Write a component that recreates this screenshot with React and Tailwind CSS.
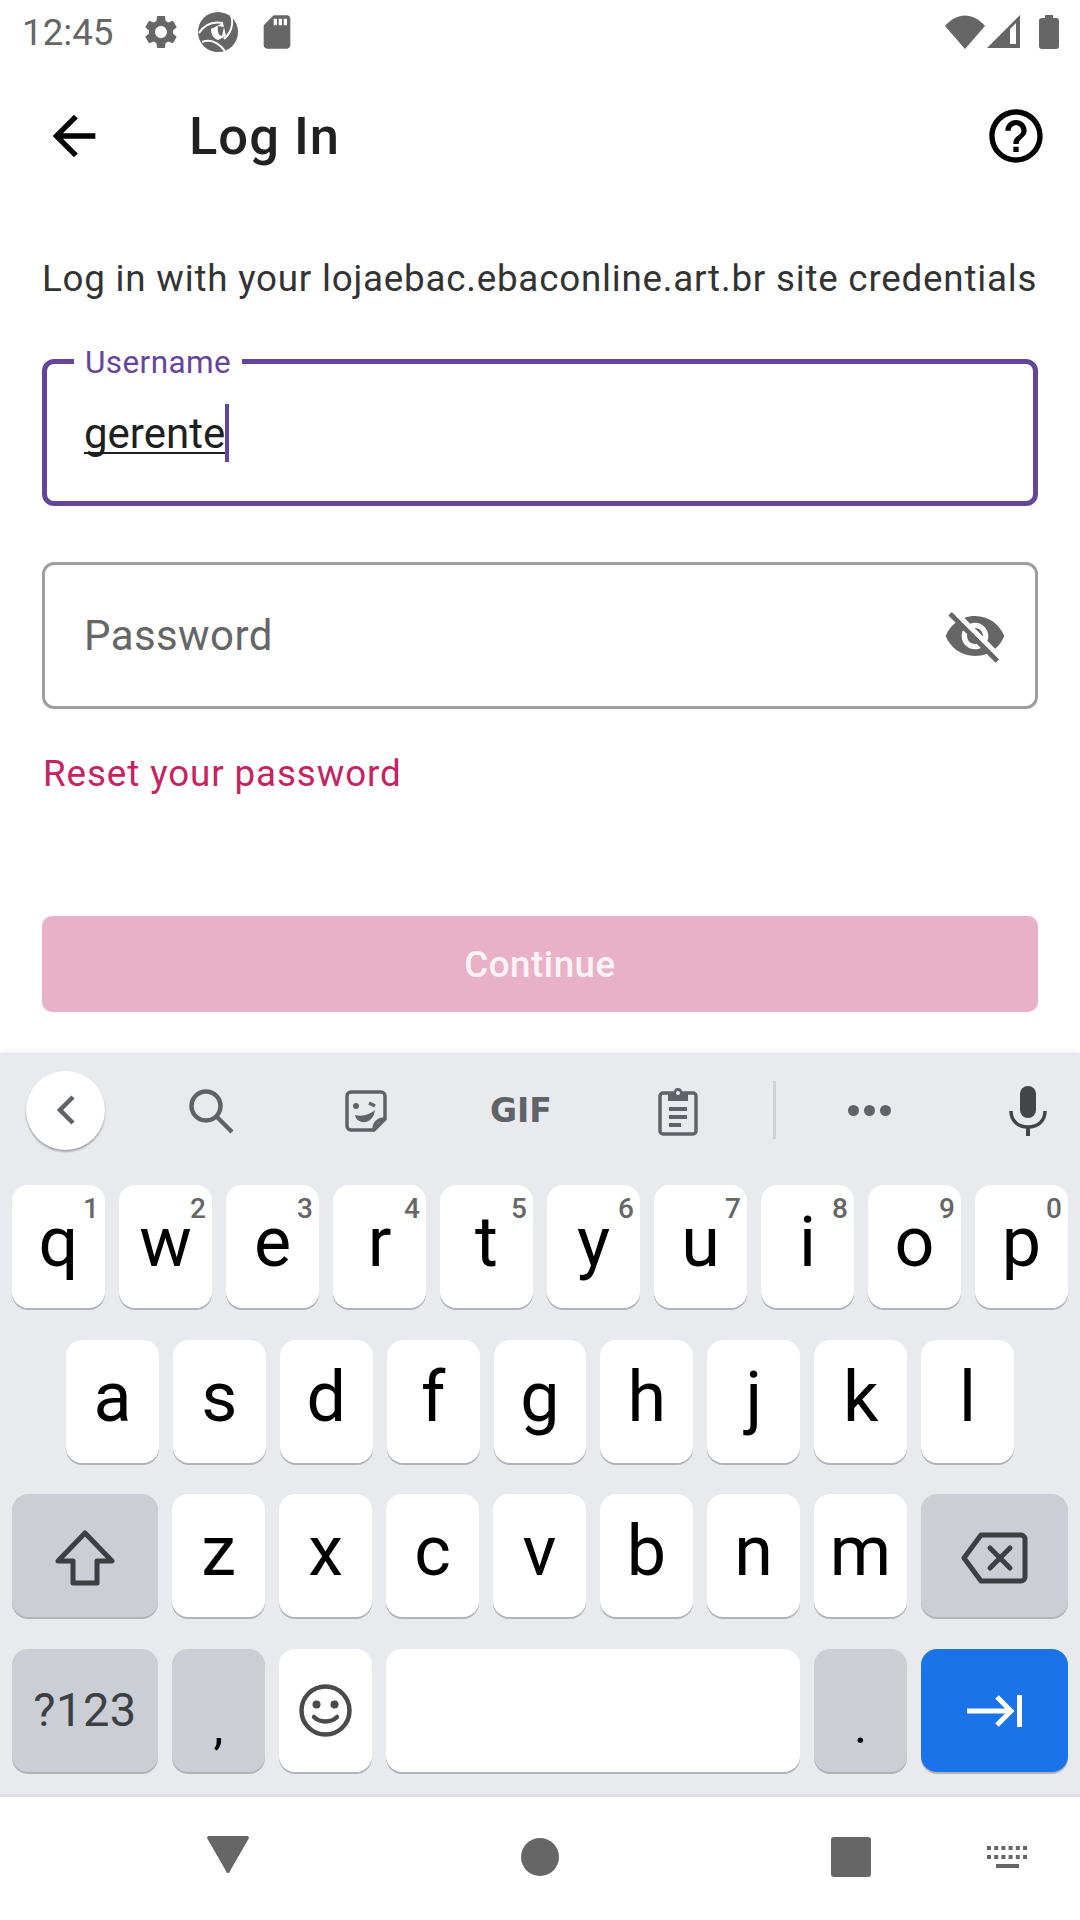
import { MdArrowBack, MdHelpOutline, MdVisibilityOff, MdSettings, MdSdCard } from "react-icons/md";

const Key = ({ label, hint }) => (
  <div className="relative flex-1 h-[123px] bg-white rounded-[16px] shadow-[0_2px_0_#b1b3b7] flex justify-center pt-[22px] text-[70px] leading-[70px] text-black">
    <span className="h-[70px]">{label}</span>
    {hint && <span className="absolute top-[8px] right-[6px] text-[28px] leading-[32px] font-medium text-[#666666]">{hint}</span>}
  </div>
)

const Aperture = () => (
  <svg width="40" height="40" viewBox="0 0 40 40" className="ml-[17px]">
    <circle cx="20" cy="20" r="20" fill="#666666" />
    <path d="M1 21C6 13 14 9 25 11" fill="none" stroke="white" strokeWidth="2" />
    <path d="M33 3C36 12 33 21 26 27" fill="none" stroke="white" strokeWidth="2" />
    <path d="M4 30C12 27 20 30 27 39" fill="none" stroke="white" strokeWidth="2" />
    <path d="M13 17L25 11L28 24L20 28C15 26 13 22 13 17Z" fill="white" />
    <path d="M20 14L26 15L24 24C21 24 19 20 20 14Z" fill="#666666" />
  </svg>
)

const Sticker = () => (
  <svg width="44" height="44" viewBox="0 0 44 44" className="ml-[109px] mt-[2px]" fill="none" stroke="#5f6368">
    <path d="M30 41H7a4 4 0 0 1-4-4V7a4 4 0 0 1 4-4h30a4 4 0 0 1 4 4v23L30 41Z" strokeWidth="3.5" />
    <path d="M30 41c0-7 4-11 11-11" strokeWidth="3.5" />
    <circle cx="12" cy="17" r="3" fill="#5f6368" stroke="none" />
    <path d="M25 14l6 3" strokeWidth="3.5" />
    <path d="M11 26c8 2 15-1 20-5-1 8-6 13-13 12-4-1-6-3-7-7Z" fill="#5f6368" stroke="none" />
  </svg>
)

const Clipboard = () => (
  <svg width="40" height="50" viewBox="0 0 40 50" className="ml-[107px] mt-[2px]" fill="none">
    <rect x="2" y="7" width="36" height="41" rx="3" stroke="#5f6368" strokeWidth="3.5" />
    <path d="M10 6h6a4 4 0 0 1 8 0h6v9H10Z" fill="#5f6368" />
    <circle cx="20" cy="7" r="2" fill="#e8eaed" />
    <rect x="11" y="21" width="18" height="4" fill="#5f6368" />
    <rect x="11" y="29" width="18" height="4" fill="#5f6368" />
    <rect x="11" y="37" width="12" height="4" fill="#5f6368" />
  </svg>
)

const Mic = () => (
  <svg width="38" height="50" viewBox="0 0 38 50" className="ml-[118px] mt-[2px]" fill="none">
    <rect x="11" y="0" width="16" height="32" rx="8" fill="#444548" />
    <path d="M2 25c0 10 7 16 17 16s17-6 17-16" stroke="#444548" strokeWidth="3.5" />
    <rect x="17" y="40" width="4" height="10" fill="#444548" />
  </svg>
)

const KeyboardGlyph = () => (
  <svg width="41" height="22" viewBox="0 0 41 22" fill="#666666" className="ml-[116px]">
    {[0, 7.2, 14.4, 21.6, 28.8, 36].map((x) => (
      <g key={x}>
        <rect x={x} y="0" width="4" height="4" />
        <rect x={x} y="9" width="4" height="4" />
      </g>
    ))}
    <rect x="9" y="18" width="23" height="4" />
  </svg>
)

const App = () => {
  return (
    <div className="w-full h-[1920px] bg-white flex flex-col font-[Roboto,sans-serif] overflow-hidden">
      {/* status bar */}
      <div className="h-[63px] flex items-center pl-[22px] pr-[21px] text-[#666666]">
        <span className="text-[36.75px] leading-[40px] w-[91px] mt-[3px]">12:45</span>
        <MdSettings size={40} className="ml-[28px]" />
        <Aperture />
        <MdSdCard size={40} className="ml-[19px]" />
        <svg width="40" height="34" viewBox="0 0 40 34" className="ml-auto" fill="#666666">
          <path d="M20 34L0 11C12 -3 28 -3 40 11Z" />
        </svg>
        <svg width="33" height="33" viewBox="0 0 33 33" className="ml-[2px]" fill="#666666">
          <path d="M33 0V33H0ZM29 8L23 14V29H29Z" fillRule="evenodd" />
        </svg>
        <svg width="20" height="34" viewBox="0 0 20 34" className="ml-[19px]" fill="#666666">
          <path d="M6 0H14V3H17a3 3 0 0 1 3 3V31a3 3 0 0 1-3 3H3a3 3 0 0 1-3-3V6a3 3 0 0 1 3-3H6Z" />
        </svg>
      </div>

      {/* app bar */}
      <div className="h-[146px] flex items-center pl-[42px] pr-[32px]">
        <MdArrowBack size={64} className="text-black" />
        <div className="ml-[83px] text-[52.5px] leading-[60px] font-medium tracking-[1px] text-[#212121]">Log In</div>
        <MdHelpOutline size={64} className="ml-auto text-black" />
      </div>

      {/* form */}
      <div className="px-[42px] flex flex-col">
        <p className="mt-[42px] text-[36.75px] leading-[56px] tracking-[0.78px] text-[#333333] whitespace-nowrap">
          Log in with your lojaebac.ebaconline.art.br site credentials
        </p>

        <div className="relative mt-[52px] h-[147px] border-[5px] border-[#65459a] rounded-[12px] pl-[37px]">
          <span className="absolute -top-[13px] left-[27px] bg-white px-[11px] text-[31.5px] leading-[24px] text-[#65459a] tracking-[0.4px]">Username</span>
          <div className="flex items-start">
            <span className="mt-[52px] text-[42px] leading-[36px] text-[#1f1f1f] border-b-[2px] border-[#1f1f1f]">gerente</span>
            <span className="mt-[40px] w-[4px] h-[58px] bg-[#65459a]" />
          </div>
        </div>

        <div className="mt-[56px] h-[147px] border-[3px] border-[#9e9e9e] rounded-[12px] pl-[39px] pr-[28px] flex items-center justify-between">
          <span className="text-[42px] leading-[50px] text-[#666666] tracking-[0.4px]">Password</span>
          <MdVisibilityOff size={64} className="text-[#666666]" />
        </div>

        <div className="mt-[43px] text-[36.75px] leading-[44px] text-[#c52362] tracking-[0.9px] pl-[1px]">Reset your password</div>

        <div className="mt-[120px] h-[96px] rounded-[10px] bg-[#e8b1c7] flex items-center justify-center text-[36.75px] font-medium tracking-[0.5px] text-[#fdf3f7]">
          <span className="mt-[2px]">Continue</span>
        </div>
      </div>

      {/* keyboard */}
      <div className="mt-auto bg-[#e8eaed] border-b-[3px] border-[#e0e0e0] shadow-[0_-2px_4px_rgba(0,0,0,0.05)]">
        <div className="h-[132px] flex items-center pl-[26px] pb-[18px]">
          <div className="w-[79px] h-[79px] rounded-full bg-white shadow-[0_2px_2px_rgba(0,0,0,0.3)] flex items-center justify-center">
            <svg width="20" height="30" viewBox="0 0 20 30" fill="none" stroke="#5f6368" strokeWidth="4.5">
              <path d="M17 2L4 15L17 28" />
            </svg>
          </div>
          <svg width="46" height="46" viewBox="0 0 46 46" className="ml-[84px] mt-[3px]" fill="none" stroke="#5f6368" strokeWidth="4.5">
            <circle cx="17" cy="17" r="14.5" />
            <path d="M27 27L43 43" />
          </svg>
          <Sticker />
          <span className="ml-[102px] mt-[2px] w-[61px] text-[33px] leading-[34px] font-bold text-[#5f6368] font-['DejaVu_Sans',sans-serif]">GIF</span>
          <Clipboard />
          <div className="ml-[75px] w-[3px] h-[58px] bg-[#cfd1d5]" />
          <div className="ml-[72px] flex gap-[5px]">
            <span className="w-[11px] h-[11px] rounded-full bg-[#5f6368]" />
            <span className="w-[11px] h-[11px] rounded-full bg-[#5f6368]" />
            <span className="w-[11px] h-[11px] rounded-full bg-[#5f6368]" />
          </div>
          <Mic />
        </div>

        <div className="flex flex-col gap-[31.67px] pb-[22px]">
          <div className="flex gap-[14px] px-[12px]">
            <Key label="q" hint="1" />
            <Key label="w" hint="2" />
            <Key label="e" hint="3" />
            <Key label="r" hint="4" />
            <Key label="t" hint="5" />
            <Key label="y" hint="6" />
            <Key label="u" hint="7" />
            <Key label="i" hint="8" />
            <Key label="o" hint="9" />
            <Key label="p" hint="0" />
          </div>
          <div className="flex gap-[14px] px-[66px]">
            <Key label="a" />
            <Key label="s" />
            <Key label="d" />
            <Key label="f" />
            <Key label="g" />
            <Key label="h" />
            <Key label="j" />
            <Key label="k" />
            <Key label="l" />
          </div>
          <div className="flex gap-[14px] px-[12px]">
            <div className="w-[146px] h-[123px] bg-[#cbced5] rounded-[16px] shadow-[0_2px_0_#b1b3b7] flex items-center justify-center pt-[4px]">
              <svg width="60" height="56" viewBox="0 0 60 56" fill="none" stroke="#3c4043" strokeWidth="5" strokeLinejoin="round">
                <path d="M30 3L57 31H42V53H18V31H3Z" />
              </svg>
            </div>
            <Key label="z" />
            <Key label="x" />
            <Key label="c" />
            <Key label="v" />
            <Key label="b" />
            <Key label="n" />
            <Key label="m" />
            <div className="w-[147px] h-[123px] bg-[#cbced5] rounded-[16px] shadow-[0_2px_0_#b1b3b7] flex items-center justify-center pt-[4px]">
              <svg width="67" height="52" viewBox="0 0 67 52" fill="none" stroke="#3c4043" strokeWidth="5" strokeLinejoin="round" strokeLinecap="round">
                <path d="M20 3H60a4 4 0 0 1 4 4V45a4 4 0 0 1-4 4H20L3 26Z" />
                <path d="M29 16L49 36M49 16L29 36" />
              </svg>
            </div>
          </div>
          <div className="flex gap-[14px] px-[12px]">
            <div className="w-[146px] h-[123px] bg-[#cbced5] rounded-[16px] shadow-[0_2px_0_#b1b3b7] flex items-center justify-center text-[47px] tracking-[0.5px] text-[#3c4043]">?123</div>
            <div className="w-[93px] h-[123px] bg-[#cbced5] rounded-[16px] shadow-[0_2px_0_#b1b3b7] flex justify-center pt-[47px] text-[50px] leading-[60px] text-black">,</div>
            <div className="w-[93px] h-[123px] bg-white rounded-[16px] shadow-[0_2px_0_#b1b3b7] flex items-center justify-center">
              <svg width="53" height="53" viewBox="0 0 53 53" fill="none" stroke="#4a4a4a">
                <circle cx="26.5" cy="26.5" r="24" strokeWidth="4.5" />
                <circle cx="17.5" cy="20.5" r="4" fill="#4a4a4a" stroke="none" />
                <circle cx="35.5" cy="20.5" r="4" fill="#4a4a4a" stroke="none" />
                <path d="M15 33c6 6 17 6 23 0" strokeWidth="4.5" strokeLinecap="round" />
              </svg>
            </div>
            <div className="flex-1 h-[123px] bg-white rounded-[16px] shadow-[0_2px_0_#b1b3b7]" />
            <div className="w-[93px] h-[123px] bg-[#cbced5] rounded-[16px] shadow-[0_2px_0_#b1b3b7] flex justify-center pt-[47px] text-[50px] leading-[60px] text-black">.</div>
            <div className="w-[147px] h-[123px] bg-[#1a73e8] rounded-[16px] shadow-[0_2px_0_#b1b3b7] flex items-center justify-center">
              <svg width="55" height="32" viewBox="0 0 55 32" fill="none" stroke="white" strokeWidth="5">
                <path d="M0 16H45" />
                <path d="M30 2L44 16L30 30" />
                <path d="M53 0V32" strokeWidth="6" />
              </svg>
            </div>
          </div>
        </div>
      </div>

      {/* nav bar */}
      <div className="h-[123px] flex items-center pl-[207px] pb-[3px]">
        <svg width="42" height="37" viewBox="0 0 42 37" fill="#666666" className="mb-[5px]"><path d="M2 0H40a2 2 0 0 1 2 2L23 35a2 2 0 0 1-4 0L0 2a2 2 0 0 1 2-2Z" /></svg>
        <span className="ml-[272px] w-[38px] h-[38px] rounded-full bg-[#666666]" />
        <span className="ml-[272px] w-[40px] h-[40px] rounded-[3px] bg-[#666666]" />
        <KeyboardGlyph />
      </div>
    </div>
  )
}

export default App
